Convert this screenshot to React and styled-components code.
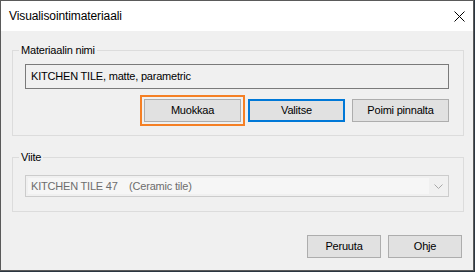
import React from "react";
import styled, { createGlobalStyle, css } from "styled-components";

const Global = createGlobalStyle`
  html, body { margin: 0; padding: 0; background: #2b3540; }
  body { font-family: "Liberation Sans", Arial, sans-serif; font-size: 11px; color: #000; }
  * { box-sizing: border-box; }
`;

const Window = styled.div`
  width: 474px;
  height: 271px;
  border: 1px solid #5a5a5a;
  display: flex;
  flex-direction: column;
  background: #f0f0f0;
`;

const TitleBar = styled.div`
  height: 30px;
  flex: none;
  background: #ffffff;
  display: flex;
  align-items: center;
  justify-content: space-between;
  padding: 0 8px 0 8px;
`;

const Title = styled.span`
  font-size: 12px;
  line-height: 14px;
  letter-spacing: -0.1px;
  color: #000;
`;

const Body = styled.div`
  flex: 1;
  display: flex;
  flex-direction: column;
  padding: 19px 9px 12px 11px;
`;

const Group = styled.div`
  position: relative;
  border: 1px solid #dcdcdc;
  padding: ${(p) => p.$pad};
  margin-bottom: ${(p) => p.$mb || 0}px;
`;

const Legend = styled.span`
  position: absolute;
  top: -8px;
  left: 6px;
  padding: 0 2px;
  background: #f0f0f0;
  font-size: 11px;
  line-height: 14px;
  letter-spacing: -0.2px;
  color: #000;
`;

const TextField = styled.div`
  height: 25px;
  border: 1px solid #7a7a7a;
  background: #f0f0f0;
  display: flex;
  align-items: center;
  padding: 0 5px 2px 5px;
  font-size: 11px;
  line-height: 14px;
  letter-spacing: -0.2px;
  color: #000;
`;

const ButtonRow = styled.div`
  display: flex;
  justify-content: flex-end;
  gap: 7px;
  margin-top: ${(p) => p.$mt || 0}px;
  padding-right: ${(p) => p.$pr || 0}px;
`;

const Button = styled.button`
  width: ${(p) => p.$w}px;
  height: 23px;
  margin: 0;
  padding: 0 0 1px 0;
  background: #e1e1e1;
  border: 1px solid #adadad;
  font-family: "Liberation Sans", Arial, sans-serif;
  font-size: 11px;
  line-height: 14px;
  letter-spacing: -0.2px;
  color: #000;
  ${(p) =>
    p.$default &&
    css`
      border: 2px solid #0078d7;
    `}
  ${(p) =>
    p.$highlight &&
    css`
      outline: 2px solid #f58025;
      outline-offset: 2px;
    `}
`;

const Combo = styled.div`
  height: 22px;
  border: 1px solid #cccccc;
  background: #f0f0f0;
  display: flex;
`;

const ComboText = styled.div`
  flex: 1;
  margin: 2px 0 2px 2px;
  background: #f6f6f6;
  padding-left: 3px;
  display: flex;
  align-items: center;
  white-space: pre;
  font-size: 11px;
  line-height: 14px;
  letter-spacing: -0.2px;
  color: #6d6d6d;
`;

const ComboArrow = styled.div`
  width: 19px;
  display: flex;
  align-items: center;
  justify-content: center;
`;

const CloseIcon = () => (
  <svg width="11" height="11" viewBox="0 0 11 11">
    <path d="M0.5 0.5 L10.5 10.5 M10.5 0.5 L0.5 10.5" stroke="#000" strokeWidth="1" fill="none" />
  </svg>
);

const Chevron = () => (
  <svg width="9" height="5" viewBox="0 0 9 5">
    <path d="M0.5 0.5 L4.5 4.5 L8.5 0.5" stroke="#a8a8a8" strokeWidth="1" fill="none" />
  </svg>
);

export default function App() {
  return (
    <>
      <Global />
      <Window>
        <TitleBar>
          <Title>Visualisointimateriaali</Title>
          <CloseIcon />
        </TitleBar>
        <Body>
          <Group $pad="13px 14px 13px 12px" $mb={21}>
            <Legend>Materiaalin nimi</Legend>
            <TextField>KITCHEN TILE, matte, parametric</TextField>
            <ButtonRow $mt={10}>
              <Button $w={97} $highlight>Muokkaa</Button>
              <Button $w={97} $default>Valitse</Button>
              <Button $w={97}>Poimi pinnalta</Button>
            </ButtonRow>
          </Group>
          <Group $pad="17px 14px 14px 12px" $mb={23}>
            <Legend>Viite</Legend>
            <Combo>
              <ComboText>KITCHEN TILE 47    (Ceramic tile)</ComboText>
              <ComboArrow>
                <Chevron />
              </ComboArrow>
            </Combo>
          </Group>
          <ButtonRow $pr={2}>
            <Button $w={74}>Peruuta</Button>
            <Button $w={74}>Ohje</Button>
          </ButtonRow>
        </Body>
      </Window>
    </>
  );
}
